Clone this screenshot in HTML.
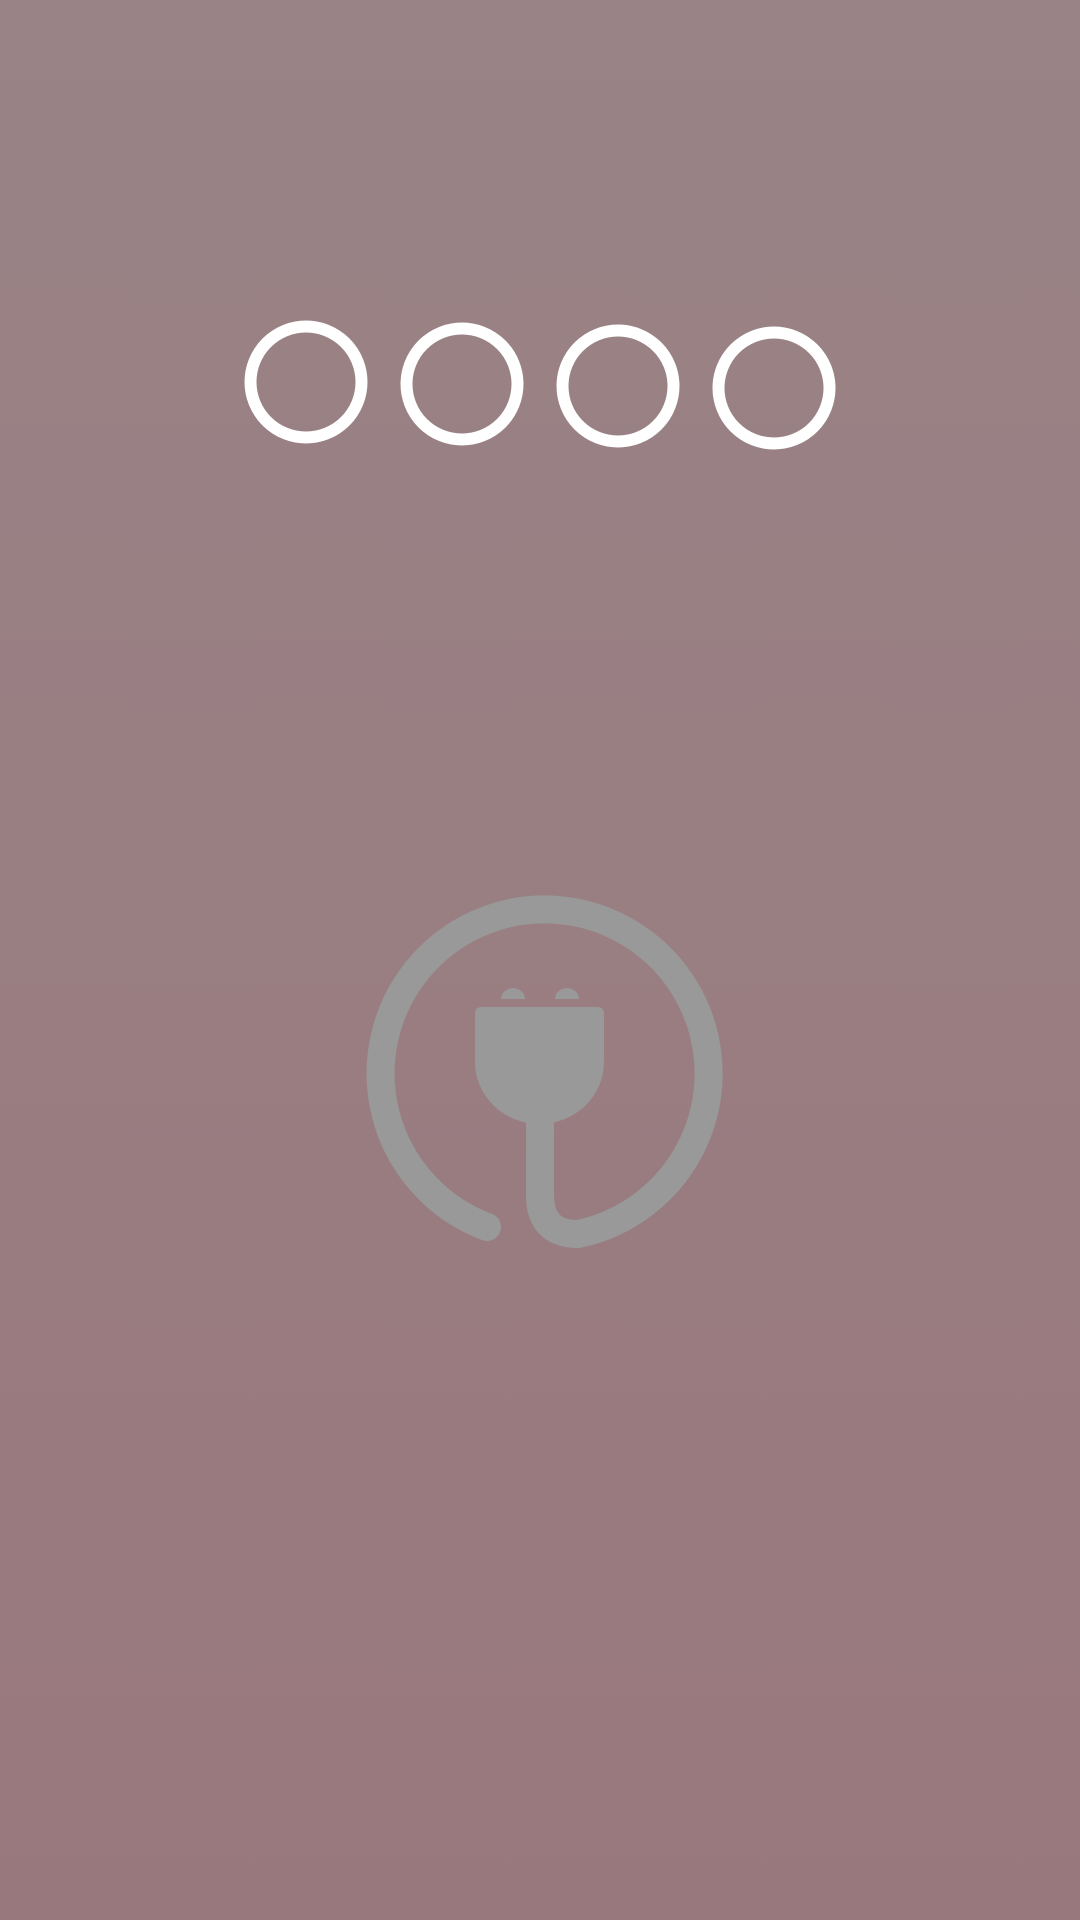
<!DOCTYPE html>
<html><head><style>
html,body{margin:0;padding:0}
body{width:1080px;height:1920px;background:linear-gradient(#998386,#99787d);overflow:hidden}
</style></head><body>
<svg width="1080" height="1920" viewBox="0 0 1080 1920" style="position:absolute;left:0;top:0">
<g fill="none" stroke="#fff" stroke-width="12">
<circle cx="306" cy="382" r="55.5"/>
<circle cx="462" cy="384" r="55.5"/>
<circle cx="618" cy="386" r="55.5"/>
<circle cx="774" cy="388" r="55.5"/>
</g>
<g fill="#999999">
<path d="M482 1007 H597 Q604 1007 604 1014 V1062 A64.5 62 0 0 1 475 1062 V1014 Q475 1007 482 1007 Z"/>
<path d="M501 999 A12 11 0 0 1 525 999 Z"/>
<path d="M555 999 A12 11 0 0 1 579 999 Z"/>
</g>
<path d="M540 1100 L540 1195 Q540 1234 578 1234 A164 164 0 1 0 487 1227" fill="none" stroke="#999999" stroke-width="28" stroke-linecap="round" stroke-linejoin="round"/>
</svg>
</body></html>
